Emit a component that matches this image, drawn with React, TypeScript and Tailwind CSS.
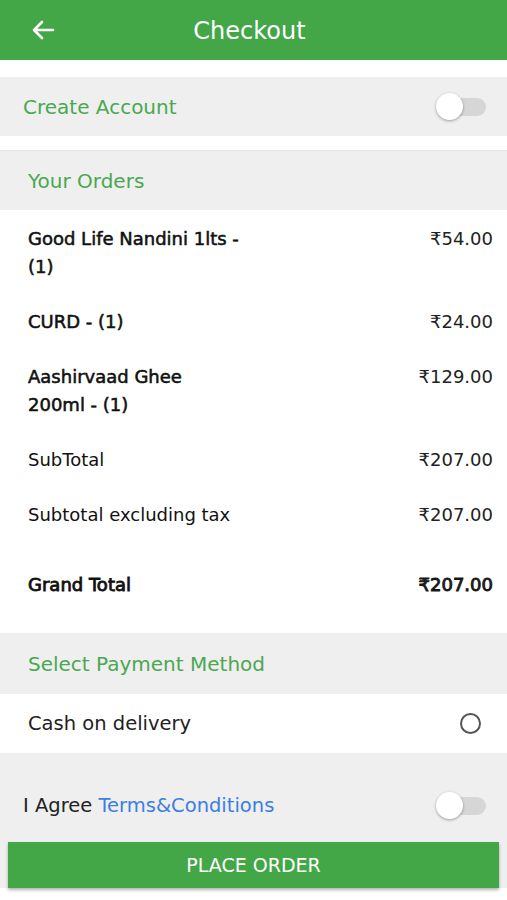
import React from "react";

const font = { fontFamily: '"DejaVu Sans", "Open Sans", sans-serif' };

function Toggle() {
  return (
    <div className="relative w-[50px] h-[28px] flex items-center">
      <div className="absolute right-0 w-[40px] h-[18px] rounded-full bg-[#d6d6d6]" />
      <div className="absolute left-0 w-[27px] h-[27px] rounded-full bg-white shadow-[0_1px_3px_rgba(0,0,0,0.35)]" />
    </div>
  );
}

function Item({ name, price, kind = "semi" }: { name: React.ReactNode; price: string; kind?: "semi" | "normal" | "bold" }) {
  const w =
    kind === "semi"
      ? "font-normal [-webkit-text-stroke:0.55px_#111]"
      : kind === "bold"
      ? "font-normal [-webkit-text-stroke:0.85px_#111]"
      : "font-normal";
  return (
    <div className="flex justify-between items-start">
      <div className={`text-[18px] leading-[28px] text-[#111] ${w}`}>{name}</div>
      <div
        className={`text-[18px] leading-[28px] text-[#222] ${
          kind === "bold" ? "[-webkit-text-stroke:0.85px_#111] text-[#111]" : "font-normal"
        }`}
      >
        {price}
      </div>
    </div>
  );
}

export default function App() {
  return (
    <div className="w-[507px] h-[900px] bg-white flex flex-col" style={font}>
      <div className="h-[60px] bg-[#43a748] flex items-center relative shrink-0">
        <svg className="absolute left-[31px] top-[19px]" width="24" height="22" viewBox="0 0 24 22" fill="none" stroke="white" strokeWidth="2.6" strokeLinecap="round" strokeLinejoin="round">
          <path d="M22 11H3M11 3L3 11L11 19" />
        </svg>
        <div className="w-full text-center text-white text-[24px] pt-[2px]">
          <span className="inline-block -translate-x-[4px]">Checkout</span>
        </div>
      </div>
      <div className="h-[17px] shrink-0" />
      <div className="h-[59px] bg-[#efefef] flex items-center justify-between pl-[23px] pr-[21px] shrink-0">
        <span className="text-[20px] text-[#4aa84f]">Create Account</span>
        <Toggle />
      </div>
      <div className="h-[14px] shrink-0" />
      <div className="h-[60px] bg-[#efefef] border-t border-[#e4e4e4] flex items-center pl-[28px] shrink-0">
        <span className="text-[20px] text-[#4aa84f]">Your Orders</span>
      </div>
      <div className="flex flex-col pl-[28px] pr-[14px] pt-[15px] h-[423px] shrink-0">
        <Item name={<>Good Life Nandini 1lts -<br />(1)</>} price="₹54.00" />
        <div className="h-[27px]" />
        <Item name="CURD - (1)" price="₹24.00" />
        <div className="h-[27px]" />
        <Item name={<>Aashirvaad Ghee<br />200ml - (1)</>} price="₹129.00" />
        <div className="h-[27px]" />
        <Item name="SubTotal" price="₹207.00" kind="normal" />
        <div className="h-[27px]" />
        <Item name="Subtotal excluding tax" price="₹207.00" kind="normal" />
        <div className="h-[42px]" />
        <Item name="Grand Total" price="₹207.00" kind="bold" />
      </div>
      <div className="h-[61px] bg-[#efefef] flex items-center pl-[28px] shrink-0">
        <span className="text-[20px] text-[#4aa84f]">Select Payment Method</span>
      </div>
      <div className="h-[59px] bg-white flex items-center justify-between pl-[28px] pr-[26px] shrink-0">
        <span className="text-[19.5px] text-[#222]">Cash on delivery</span>
        <div className="w-[21px] h-[21px] rounded-full border-[2.5px] border-[#555]" />
      </div>
      <div className="h-[135px] bg-[#efefef] flex flex-col shrink-0">
        <div className="flex items-center justify-between pl-[23px] pr-[21px] mt-[38px]">
          <span className="text-[19.5px] text-[#222]">
            I Agree <span className="text-[#3b7ee6]">Terms&amp;Conditions</span>
          </span>
          <Toggle />
        </div>
        <div className="mx-[8px] mt-[22px] h-[47px] bg-[#43a748] shadow-[0_2px_3px_rgba(0,0,0,0.3)] flex items-center justify-center">
          <span className="text-white text-[19px]">PLACE ORDER</span>
        </div>
      </div>
    </div>
  );
}
